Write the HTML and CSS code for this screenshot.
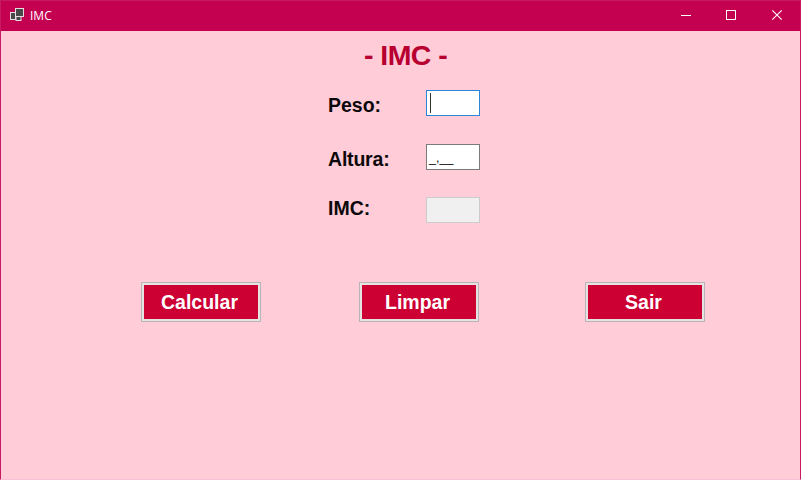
FILE: index.html
```html
<!DOCTYPE html>
<html lang="pt">
<head>
<meta charset="utf-8">
<title>IMC</title>
<link rel="stylesheet" href="styles.css">
</head>
<body>
<div class="window">
  <header class="titlebar">
    <svg class="app-icon" width="16" height="14" viewBox="0 0 16 14">
      <g fill="#484848" stroke="#e8dce2" stroke-width="1">
        <rect x="1.5" y="4.5" width="5" height="7"/>
        <rect x="7" y="8.5" width="5" height="4"/>
        <rect x="6.5" y="0.5" width="8" height="8"/>
      </g>
    </svg>
    <span class="caption">IMC</span>
    <div class="controls">
      <svg width="45" height="30" viewBox="0 0 45 30"><path d="M17 14.5h10" stroke="#fff"/></svg>
      <svg width="45" height="30" viewBox="0 0 45 30"><rect x="17.5" y="9.5" width="9" height="9" fill="none" stroke="#fff"/></svg>
      <svg width="46" height="30" viewBox="0 0 46 30"><path d="M18.3 9.3l9.4 9.4M27.7 9.3l-9.4 9.4" stroke="#fff" stroke-width="1.1"/></svg>
    </div>
  </header>
  <main class="form">
    <h1>- IMC -</h1>
    <div class="fields">
      <label class="label peso">Peso:</label><div class="box focused"><i class="caret"></i></div>
      <label class="label altura">Altura:</label><div class="box mask">_,__</div>
      <label class="label imc">IMC:</label><div class="box disabled"></div>
    </div>
    <div class="buttons">
      <button>Calcular</button>
      <button>Limpar</button>
      <button>Sair</button>
    </div>
  </main>
</div>
</body>
</html>
```
FILE: styles.css
```css
* { box-sizing: border-box; }
body { margin: 0; font-family: "Liberation Sans", Arial, sans-serif; }
.window {
  width: 801px;
  height: 480px;
  background: #ffccd8;
  border: 1px solid #c81a60;
  border-bottom-color: #f8c0d4;
  overflow: hidden;
}
.titlebar {
  height: 30px;
  background: #c40050;
  display: flex;
  align-items: center;
  padding-left: 8px;
}
.app-icon { margin-bottom: 2px; }
.caption {
  margin-left: 5px;
  font: 12px/16px "Open Sans", sans-serif;
  color: #fff;
}
.controls { display: flex; margin-left: auto; height: 30px; }
.form { padding-top: 8px; }
h1 {
  margin: 0 0 0 363px;
  font-size: 28.5px;
  letter-spacing: -0.55px;
  line-height: 32px;
  color: #b80030;
  white-space: nowrap;
}
.fields {
  display: grid;
  grid-template-columns: 98px 54px;
  grid-template-rows: 54px 53px 27px;
  margin: 19px 0 0 327px;
}
.label {
  font-size: 19.5px;
  line-height: 22px;
  font-weight: bold;
  color: #0c080a;
  padding-top: 4px;
}
.altura { letter-spacing: -0.2px; }
.imc { padding-top: 0; }
.box {
  width: 54px;
  height: 26px;
  border: 1px solid #7a7a7a;
  background: #fff;
}
.focused { border-color: #2a86d8; padding: 2px; }
.caret { display: block; width: 1px; height: 20px; margin-left: 1px; background: #333; }
.mask { font-size: 12.5px; line-height: 27px; padding-left: 2px; color: #111; }
.disabled { background: #f0f0f0; border-color: #ccc; }
.buttons { display: flex; margin: 58px 0 0 140px; }
button {
  width: 120px;
  height: 40px;
  padding: 0 3px 0 0;
  border: 1px solid #b8b4b8;
  outline: 2px solid #e6e2e2;
  outline-offset: -3px;
  background: #cc0033;
  color: #fff;
  font: bold 19.5px/22px "Liberation Sans", Arial, sans-serif;
}
button:nth-child(2) { margin-left: 98px; }
button:nth-child(3) { margin-left: 106px; }
```
